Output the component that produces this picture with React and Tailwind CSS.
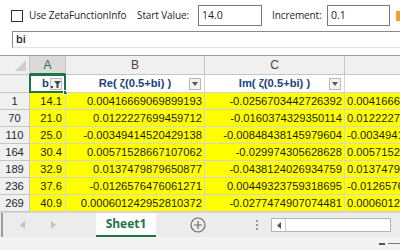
import React from 'react';

const rows = [
  ['1', '14.1', '0.00416669069899193', '-0.0256703442726392'],
  ['70', '21.0', '0.0122227699459712', '-0.0160374329350114'],
  ['110', '25.0', '-0.00349414520429138', '-0.00848438145979604'],
  ['164', '30.4', '0.00571528667107062', '-0.029974305628628'],
  ['189', '32.9', '0.0137479879650877', '-0.0438124026934759'],
  ['236', '37.6', '-0.0126576476061271', '0.00449323759318695'],
  ['269', '40.9', '0.000601242952810372', '-0.0277474907074481'],
];

const ui = { fontFamily: '"Open Sans", "Liberation Sans", sans-serif' };
const cellFont = { fontFamily: '"Liberation Sans", Arial, sans-serif' };

function DropButton({ filter }) {
  return (
    <div className="absolute right-[3px] top-[3px] w-[12px] h-[12px] border border-[#b9b9b9] bg-[#f3f3f3] flex items-center justify-center">
      {filter ? (
        <svg width="10" height="8" viewBox="0 0 10 8">
          <rect x="0" y="6" width="2" height="2" fill="#444" />
          <path d="M3 1h7L7.5 4v4H5.5V4z" fill="#444" />
        </svg>
      ) : (
        <svg width="6" height="4" viewBox="0 0 6 4">
          <path d="M0 0h6L3 4z" fill="#555" />
        </svg>
      )}
    </div>
  );
}

export default function App() {
  return (
    <div className="w-[400px] h-[250px] overflow-hidden bg-white flex flex-col text-[#1e1e1e]" style={ui}>
      {/* options bar */}
      <div className="h-[31px] flex items-center text-[10px] shrink-0">
        <div className="ml-[11px] w-[12px] h-[12px] border border-[#333] bg-white" />
        <span className="ml-[6px] w-[108px] whitespace-nowrap tracking-[-0.1px]">Use ZetaFunctionInfo</span>
        <span className="w-[61px] whitespace-nowrap tracking-[-0.1px]">Start Value:</span>
        <div className="w-[64px] h-[21px] border border-[#7a7a7a] flex items-center pl-[3px] text-[10.5px]">14.0</div>
        <span className="ml-[10px] w-[55px] whitespace-nowrap tracking-[-0.1px]">Increment:</span>
        <div className="w-[63px] h-[21px] border border-[#7a7a7a] flex items-center pl-[3px] text-[10.5px]">0.1</div>
        <span className="ml-[6px] w-[4px] h-[10px] bg-[#f0a030]" />
      </div>

      {/* formula bar */}
      <div className="pl-[12px] shrink-0">
        <div className="h-[17px] border-t border-l border-t-[#8a8a8a] border-l-[#8a8a8a] border-b border-b-[#e2e2e2] flex items-center pl-[3px] text-[11px] font-semibold">
          bi
        </div>
      </div>

      {/* grid */}
      <div className="mt-[7px] h-[157px] overflow-hidden border-t border-[#9a9a9a] shrink-0" style={cellFont}>
        <div className="grid grid-cols-[30px_36px_139px_140px_140px] w-[485px] text-[11.2px]">
          {/* column letters */}
          <div className="h-[19px] bg-[#f0f0f0] border-r border-b border-[#c6c6c6] relative">
            <svg className="absolute right-[3px] bottom-[3px]" width="11" height="11" viewBox="0 0 11 11">
              <path d="M11 0v11H0z" fill="#cfcfcf" />
            </svg>
          </div>
          <div className="h-[19px] bg-[#dadada] border-r border-[#c6c6c6] border-b-2 border-b-[#217346] flex items-center justify-center text-[#217346] text-[12px]">A</div>
          <div className="h-[19px] bg-[#f0f0f0] border-r border-b border-[#c6c6c6] flex items-center justify-center text-[#444] text-[12px]">B</div>
          <div className="h-[19px] bg-[#f0f0f0] border-r border-b border-[#c6c6c6] flex items-center justify-center text-[#444] text-[12px]">C</div>
          <div className="h-[19px] bg-[#f0f0f0] border-r border-b border-[#c6c6c6]" />

          {/* field header row */}
          <div className="h-[18px] bg-[#f0f0f0] border-r border-b border-[#c6c6c6]" />
          <div className="h-[18px] bg-white border-r border-b border-[#d4d4d4] relative flex items-center pl-[12px] font-bold text-[#203f7a]">
            b
            <DropButton filter />
            <div className="absolute -left-[1px] -top-[1px] w-[37px] h-[19px] border-2 border-[#217346]" />
            <div className="absolute -right-[3px] -bottom-[3px] w-[5px] h-[5px] bg-[#217346] border border-white" />
          </div>
          <div className="h-[18px] bg-white border-r border-b border-[#d4d4d4] relative flex items-center justify-center font-bold text-[#203f7a]">
            Re( ζ(0.5+bi) )
            <DropButton />
          </div>
          <div className="h-[18px] bg-white border-r border-b border-[#d4d4d4] relative flex items-center justify-center font-bold text-[#203f7a]">
            Im( ζ(0.5+bi) )
            <DropButton />
          </div>
          <div className="h-[18px] bg-white border-r border-b border-[#d4d4d4]" />

          {rows.map((r) => (
            <React.Fragment key={r[0]}>
              <div className="h-[17px] bg-[#f0f0f0] border-r border-b border-[#c6c6c6] flex items-center justify-center text-[#262626]">{r[0]}</div>
              <div className="h-[17px] bg-[#ffff00] border-r border-b border-[#d4d4d4] flex items-center justify-end pr-[3px]">{r[1]}</div>
              <div className="h-[17px] bg-[#ffff00] border-r border-b border-[#d4d4d4] flex items-center justify-end pr-[2px]">{r[2]}</div>
              <div className="h-[17px] bg-[#ffff00] border-r border-b border-[#d4d4d4] flex items-center justify-end pr-[2px]">{r[3]}</div>
              <div className="h-[17px] bg-[#ffff00] border-r border-b border-[#d4d4d4] flex items-center pl-[2px] whitespace-nowrap overflow-hidden">{r[2]}</div>
            </React.Fragment>
          ))}
        </div>
      </div>

      {/* sheet tabs */}
      <div className="h-[25px] bg-[#ececec] flex items-stretch shrink-0 border-t border-[#d6d6d6]">
        <div className="w-[2px] bg-[#9a9a9a] ml-[1px]" />
        <div className="flex items-center ml-[17px] gap-[26px]">
          <svg width="5" height="8" viewBox="0 0 5 8"><path d="M5 0v8L0 4z" fill="#c2c2c2" /></svg>
          <svg width="5" height="8" viewBox="0 0 5 8"><path d="M0 0v8l5-4z" fill="#c2c2c2" /></svg>
        </div>
        <div className="ml-[40px] w-[60px] bg-white border-b-2 border-[#217346] flex items-center justify-center text-[12px] font-bold text-[#217346]">
          Sheet1
        </div>
        <div className="ml-[34px] flex items-center">
          <svg width="16" height="16" viewBox="0 0 16 16">
            <circle cx="8" cy="8" r="7" fill="none" stroke="#6a6a6a" strokeWidth="1.2" />
            <path d="M8 4v8M4 8h8" stroke="#6a6a6a" strokeWidth="1.2" />
          </svg>
        </div>
        <div className="ml-[50px] flex flex-col justify-center gap-[2px]">
          <div className="w-[2px] h-[2px] bg-[#9a9a9a]" />
          <div className="w-[2px] h-[2px] bg-[#9a9a9a]" />
          <div className="w-[2px] h-[2px] bg-[#9a9a9a]" />
        </div>
        <div className="ml-[13px] flex items-center">
          <div className="w-[120px] h-[14px] bg-white border border-[#b4b4b4] flex items-stretch">
            <div className="w-[14px] border-r border-[#cfcfcf] flex items-center justify-center">
              <svg width="4" height="7" viewBox="0 0 4 7"><path d="M4 0v7L0 3.5z" fill="#555" /></svg>
            </div>
          </div>
        </div>
      </div>

      {/* status bar */}
      <div className="flex-1 bg-[#f3f3f3] flex items-center justify-end pr-0 gap-[3px]">
        <div className="w-[6px] h-[2px] bg-[#555]" />
        <div className="w-[12px] h-[1px] bg-[#777]" />
      </div>
    </div>
  );
}
